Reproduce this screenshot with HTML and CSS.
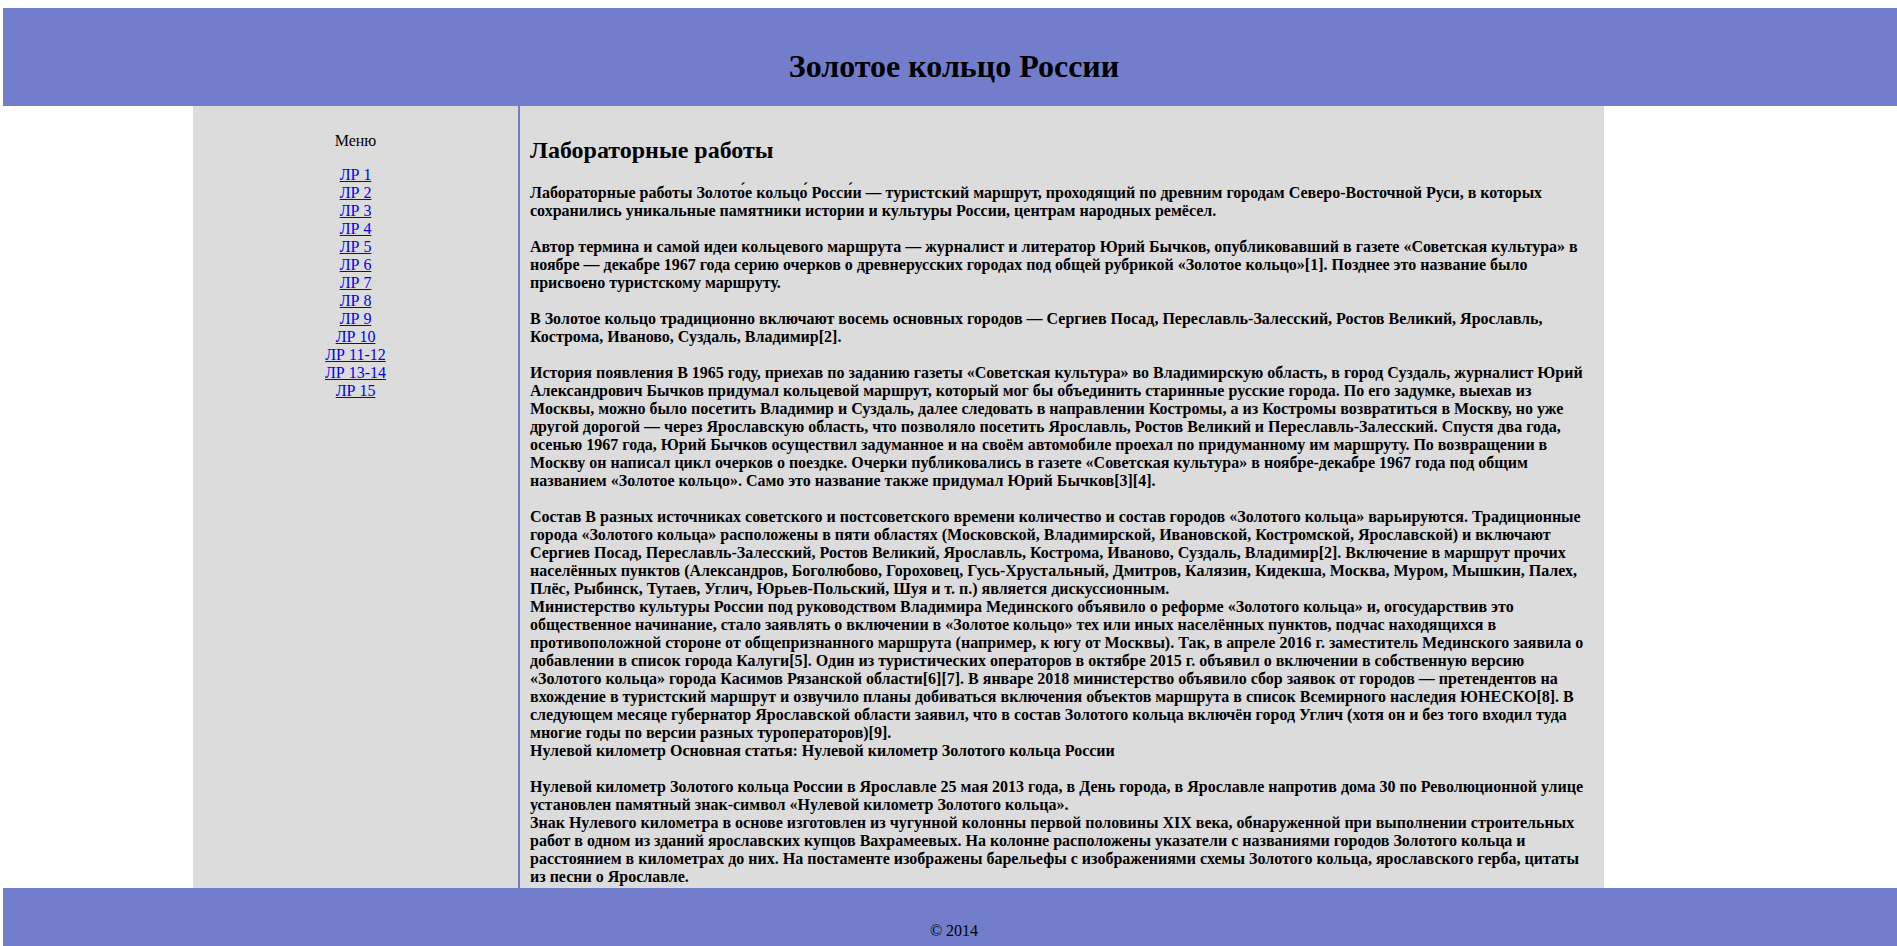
FILE: index.html
```html
<!DOCTYPE html>
<html lang="ru">
<head>
<meta charset="utf-8">
<title>Золотое кольцо России</title>
<link rel="stylesheet" href="styles.css">
</head>
<body>
<header class="site-header">
  <h1 class="site-title">Золотое кольцо России</h1>
</header>
<div class="layout">
  <aside class="sidebar">
    <p class="menu-title">Меню</p>
    <nav class="menu">
      <a href="#">ЛР 1</a>
      <a href="#">ЛР 2</a>
      <a href="#">ЛР 3</a>
      <a href="#">ЛР 4</a>
      <a href="#">ЛР 5</a>
      <a href="#">ЛР 6</a>
      <a href="#">ЛР 7</a>
      <a href="#">ЛР 8</a>
      <a href="#">ЛР 9</a>
      <a href="#">ЛР 10</a>
      <a href="#">ЛР 11-12</a>
      <a href="#">ЛР 13-14</a>
      <a href="#">ЛР 15</a>
    </nav>
  </aside>
  <main class="content">
    <h2 class="content-title">Лабораторные работы</h2>
    <div class="article">Лабораторные работы Золото&#x301;е кольцо&#x301; Росси&#x301;и — туристский маршрут, проходящий по древним городам Северо-Восточной Руси, в которых сохранились уникальные памятники истории и культуры России, центрам народных ремёсел.<br><br>Автор термина и самой идеи кольцевого маршрута — журналист и литератор Юрий Бычков, опубликовавший в газете «Советская культура» в ноябре — декабре 1967 года серию очерков о древнерусских городах под общей рубрикой «Золотое кольцо»[1]. Позднее это название было присвоено туристскому маршруту.<br><br>В Золотое кольцо традиционно включают восемь основных городов — Сергиев Посад, Переславль-Залесский, Ростов Великий, Ярославль, Кострома, Иваново, Суздаль, Владимир[2].<br><br>История появления В 1965 году, приехав по заданию газеты «Советская культура» во Владимирскую область, в город Суздаль, журналист Юрий Александрович Бычков придумал кольцевой маршрут, который мог бы объединить старинные русские города. По его задумке, выехав из Москвы, можно было посетить Владимир и Суздаль, далее следовать в направлении Костромы, а из Костромы возвратиться в Москву, но уже другой дорогой — через Ярославскую область, что позволяло посетить Ярославль, Ростов Великий и Переславль-Залесский. Спустя два года, осенью 1967 года, Юрий Бычков осуществил задуманное и на своём автомобиле проехал по придуманному им маршруту. По возвращении в Москву он написал цикл очерков о поездке. Очерки публиковались в газете «Советская культура» в ноябре-декабре 1967 года под общим названием «Золотое кольцо». Само это название также придумал Юрий Бычков[3][4].<br><br>Состав В разных источниках советского и постсоветского времени количество и состав городов «Золотого кольца» варьируются. Традиционные города «Золотого кольца» расположены в пяти областях (Московской, Владимирской, Ивановской, Костромской, Ярославской) и включают Сергиев Посад, Переславль-Залесский, Ростов Великий, Ярославль, Кострома, Иваново, Суздаль, Владимир[2]. Включение в маршрут прочих населённых пунктов (Александров, Боголюбово, Гороховец, Гусь-Хрустальный, Дмитров, Калязин, Кидекша, Москва, Муром, Мышкин, Палех, Плёс, Рыбинск, Тутаев, Углич, Юрьев-Польский, Шуя и т. п.) является дискуссионным.<br>Министерство культуры России под руководством Владимира Мединского объявило о реформе «Золотого кольца» и, огосударствив это общественное начинание, стало заявлять о включении в «Золотое кольцо» тех или иных населённых пунктов, подчас находящихся в противоположной стороне от общепризнанного маршрута (например, к югу от Москвы). Так, в апреле 2016 г. заместитель Мединского заявила о добавлении в список города Калуги[5]. Один из туристических операторов в октябре 2015 г. объявил о включении в собственную версию «Золотого кольца» города Касимов Рязанской области[6][7]. В январе 2018 министерство объявило сбор заявок от городов — претендентов на вхождение в туристский маршрут и озвучило планы добиваться включения объектов маршрута в список Всемирного наследия ЮНЕСКО[8]. В следующем месяце губернатор Ярославской области заявил, что в состав Золотого кольца включён город Углич (хотя он и без того входил туда многие годы по версии разных туроператоров)[9].<br>Нулевой километр Основная статья: Нулевой километр Золотого кольца России<br><br>Нулевой километр Золотого кольца России в Ярославле 25 мая 2013 года, в День города, в Ярославле напротив дома 30 по Революционной улице установлен памятный знак-символ «Нулевой километр Золотого кольца».<br>Знак Нулевого километра в основе изготовлен из чугунной колонны первой половины XIX века, обнаруженной при выполнении строительных работ в одном из зданий ярославских купцов Вахрамеевых. На колонне расположены указатели с названиями городов Золотого кольца и расстоянием в километрах до них. На постаменте изображены барельефы с изображениями схемы Золотого кольца, ярославского герба, цитаты из песни о Ярославле.</div>
  </main>
</div>
<footer class="site-footer">
  <p class="copyright">© 2014</p>
</footer>
</body>
</html>
```
FILE: styles.css
```css
html, body {
  overflow: hidden;
}
body {
  margin: 8px 0 0 3px;
  font-family: "Liberation Serif", "Times New Roman", serif;
  font-size: 16px;
  line-height: 18px;
  color: #000;
  background: #fff;
}
.site-header {
  background: #727ecb;
  padding: 19px 0 0;
  margin-right: -8px;
  text-align: center;
}
.site-title {
  margin: 0;
  padding: 21px 0 21px;
  font-size: 32px;
  line-height: 37px;
  font-weight: bold;
}
.layout {
  display: flex;
  margin-left: 190px;
  width: 1411px;
}
.sidebar {
  width: 325px;
  flex: none;
  background: #dcdcdc;
  text-align: center;
  padding-top: 10px;
}
.menu-title {
  margin: 16px 0;
}
.menu a {
  display: block;
  width: max-content;
  margin: 0 auto;
  color: #0000ee;
  text-decoration: underline;
}
.content {
  flex: 1;
  background: #dcdcdc;
  border-left: 2px solid #727ecb;
  padding: 10px 20px 2px 10px;
}
.content-title {
  margin: 20px 0;
  font-size: 24px;
  line-height: 28px;
  font-weight: bold;
}
.article {
  font-weight: bold;
}
.site-footer {
  background: #727ecb;
  height: 58px;
  margin-right: -8px;
  text-align: center;
  overflow: hidden;
}
.copyright {
  margin: 0;
  padding-top: 34px;
}
```
